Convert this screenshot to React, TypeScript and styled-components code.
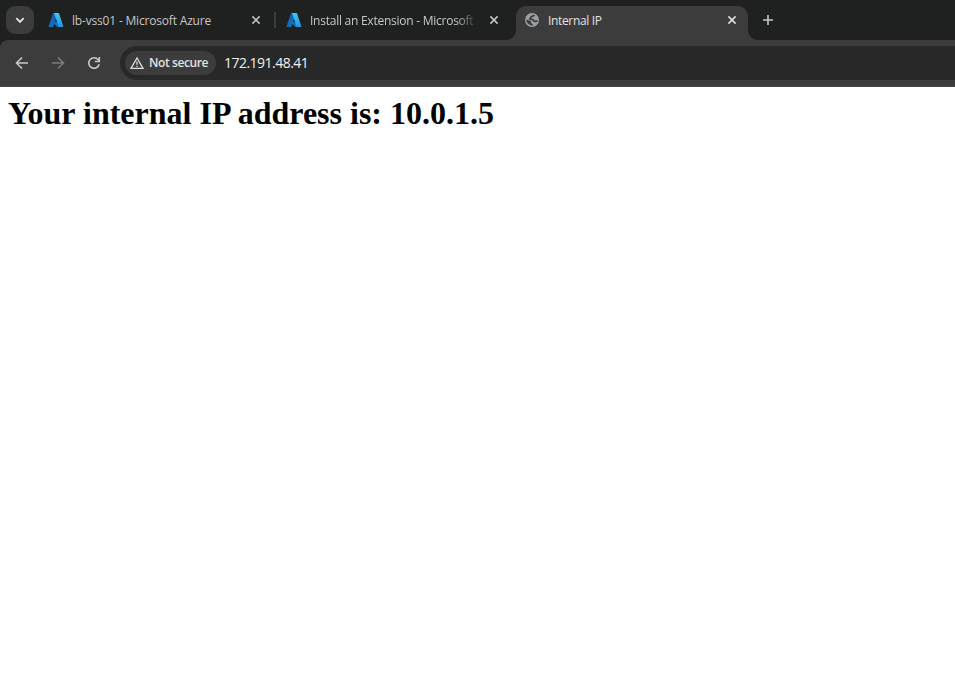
import React from "react";
import styled, { createGlobalStyle } from "styled-components";

const GlobalStyle = createGlobalStyle`
  * { box-sizing: border-box; }
  html, body { margin: 0; background: #fff; overflow: hidden; }
`;

const Browser = styled.div`
  height: 698px;
  display: flex;
  flex-direction: column;
  background: #fff;
  font-family: "Open Sans", "Noto Sans", sans-serif;
`;

const TabStrip = styled.header`
  height: 40px;
  flex: none;
  display: flex;
  align-items: flex-end;
  background: #1f2020;
  padding-left: 6px;
`;

const TabSearch = styled.button`
  width: 28px;
  height: 28px;
  margin: 0 6px 6px 0;
  padding: 0;
  border: 0;
  border-radius: 9px;
  background: #3c3c3c;
  display: grid;
  place-items: center;
`;

const Tab = styled.div<{ $active?: boolean }>`
  position: relative;
  width: 232px;
  height: 34px;
  padding: 0 8px 6px;
  display: flex;
  align-items: center;
  color: ${(p) => (p.$active ? "#e3e3e3" : "#c7c7c7")};
  background: ${(p) => (p.$active ? "#3c3c3c" : "transparent")};
  border-radius: 10px 10px 0 0;

  &::before,
  &::after {
    content: ${(p) => (p.$active ? '""' : "none")};
    position: absolute;
    bottom: 0;
    width: 10px;
    height: 10px;
  }
  &::before {
    left: -10px;
    background: radial-gradient(circle at 0 0, transparent 9.5px, #3c3c3c 10.5px);
  }
  &::after {
    right: -10px;
    background: radial-gradient(circle at 100% 0, transparent 9.5px, #3c3c3c 10.5px);
  }
`;

const Favicon = styled.span`
  width: 16px;
  height: 16px;
  flex: none;

  svg { display: block; }
`;

const TabTitle = styled.span<{ $spacing: number; $fade?: boolean }>`
  flex: 1;
  min-width: 0;
  margin-left: 8px;
  padding-top: 2px;
  overflow: hidden;
  white-space: nowrap;
  font-size: 12px;
  line-height: 18px;
  letter-spacing: ${(p) => p.$spacing}px;
  mask-image: ${(p) => (p.$fade ? "linear-gradient(to right, #000 calc(100% - 22px), transparent)" : "none")};
`;

const CloseButton = styled.button<{ $tight?: boolean }>`
  width: 16px;
  height: 16px;
  margin-left: ${(p) => (p.$tight ? 8 : 12)}px;
  padding: 0;
  border: 0;
  background: none;
  color: inherit;
  display: grid;
  place-items: center;
`;

const Divider = styled.i`
  width: 2px;
  height: 16px;
  margin: 0 2px 12px;
  background: #3c3c3c;
`;

const TabGap = styled.span`
  width: 6px;
`;

const NewTab = styled.button`
  width: 28px;
  height: 28px;
  margin: 0 0 6px 6px;
  padding: 0;
  border: 0;
  background: none;
  display: grid;
  place-items: center;
`;

const ToolbarBack = styled.div`
  flex: none;
  background: #1f2020;
`;

const Toolbar = styled.nav`
  height: 47px;
  display: flex;
  align-items: center;
  padding: 0 0 1px 4px;
  background: #3c3c3c;
  border-top-left-radius: 8px;
  border-bottom: 1px solid #454445;
`;

const NavButton = styled.button`
  width: 36px;
  height: 34px;
  padding: 0;
  border: 0;
  background: none;
  display: grid;
  place-items: center;
`;

const AddressBar = styled.div`
  flex: 1;
  height: 34px;
  margin-left: 8px;
  padding-left: 5px;
  display: flex;
  align-items: center;
  border-radius: 17px 0 0 17px;
  background: #282828;
`;

const SecurityChip = styled.div`
  width: 91px;
  height: 24px;
  padding-left: 5px;
  display: flex;
  align-items: center;
  gap: 5px;
  border-radius: 12px;
  background: #3c3c3c;
  color: #e3e3e3;
  font-size: 12px;
  font-weight: 600;
  letter-spacing: -0.4px;
  white-space: nowrap;
`;

const Url = styled.span`
  margin-left: 8px;
  color: #f0f0f0;
  font-size: 14px;
  letter-spacing: -0.52px;
`;

const Page = styled.main`
  flex: 1;
  padding: 8px;
`;

const Heading = styled.h1`
  margin: 0;
  color: #000;
  font: bold 32px/37px "Liberation Serif", "Times New Roman", serif;
`;

const AzureLogo = ({ id }: { id: string }) => (
  <svg width="16" height="16" viewBox="0 0 96 96">
    <defs>
      <linearGradient id={`${id}-l`} x1="0.6" y1="0" x2="0.2" y2="1">
        <stop stopColor="#1a5fa8" />
        <stop offset="1" stopColor="#0f70c4" />
      </linearGradient>
      <linearGradient id={`${id}-r`} x1="0.3" y1="0" x2="0.7" y2="1">
        <stop stopColor="#3ccbf4" />
        <stop offset="1" stopColor="#2892df" />
      </linearGradient>
    </defs>
    <path fill={`url(#${id}-l)`} d="M33.34 6.54h26.04l-27.03 80.1a4.15 4.15 0 0 1-3.94 2.81H8.15a4.14 4.14 0 0 1-3.93-5.47L29.4 9.38a4.15 4.15 0 0 1 3.94-2.83z" />
    <path fill="#0078d4" d="M71.17 60.26H29.88a1.91 1.91 0 0 0-1.3 3.31l26.53 24.76a4.17 4.17 0 0 0 2.85 1.13h23.38z" />
    <path fill={`url(#${id}-r)`} d="M66.6 9.36a4.14 4.14 0 0 0-3.93-2.82H33.65a4.15 4.15 0 0 1 3.93 2.82l25.18 74.62a4.15 4.15 0 0 1-3.93 5.48h29.02a4.15 4.15 0 0 0 3.93-5.48z" />
  </svg>
);

const GlobeIcon = () => (
  <svg width="16" height="16" viewBox="0 0 16 16">
    <circle cx="8" cy="8" r="7" fill="#9aa0a6" />
    <path
      fill="none"
      stroke="#3c3c3c"
      strokeWidth="1.7"
      strokeLinejoin="round"
      d="M10.500 3.200C9.800 4.600 7 3.700 6.900 5.300c0 .900-1.400.8-1.200 1.600.5.9 2.600.2 3.500.8.9.500.6 1.600 1.700 1.700l2.700-.2"
    />
    <path fill="#3c3c3c" d="M2.300 7.600l3.600 1.200c1.300.5 1.500 1.100 1.300 1.900 0 .6.400.8 1 1 .7.200.9.600.8 1.200v.5c-3.700.4-6.700-2.400-6.700-5.800z" />
  </svg>
);

const CloseIcon = () => (
  <svg width="16" height="16" viewBox="0 0 16 16" stroke="currentColor" strokeWidth="1.5">
    <path d="M4.400 4.400l7.200 7.200M11.600 4.400l-7.200 7.200" />
  </svg>
);

const ChevronIcon = () => (
  <svg width="16" height="16" viewBox="0 0 16 16" fill="none" stroke="#e3e3e3" strokeWidth="1.900">
    <path d="M4.300 6.200L8 9.900l3.700-3.700" />
  </svg>
);

const PlusIcon = () => (
  <svg width="16" height="16" viewBox="0 0 16 16" stroke="#c7c7c7" strokeWidth="1.600">
    <path d="M8 3v10M3 8h10" />
  </svg>
);

const ArrowIcon = ({ forward }: { forward?: boolean }) => (
  <svg width="16" height="16" viewBox="0 0 16 16" fill="none" stroke={forward ? "#7b7b7b" : "#c7c7c7"} strokeWidth="1.600">
    <path d={forward ? "M2 8h11M8 2.500L13.500 8 8 13.500" : "M14 8H3M8 2.500L2.500 8 8 13.500"} />
  </svg>
);

const ReloadIcon = () => (
  <svg width="16" height="16" viewBox="0 0 16 16" fill="none" stroke="#c7c7c7" strokeWidth="1.600">
    <path d="M13.200 9.200A5.300 5.300 0 1 1 12.200 4.700L13.300 6" />
    <path d="M13.300 2v4.500H8.800" />
  </svg>
);

const WarningIcon = () => (
  <svg width="14" height="14" viewBox="0 0 14 14" fill="none" stroke="#dedede" strokeWidth="1.300">
    <path d="M7 2L13 12.300H1z" />
    <path d="M7 5.500v3.300M7 9.700v1.200" />
  </svg>
);

export default function App() {
  return (
    <Browser>
      <GlobalStyle />
      <TabStrip>
        <TabSearch aria-label="Search tabs"><ChevronIcon /></TabSearch>
        <Tab>
          <Favicon><AzureLogo id="first" /></Favicon>
          <TabTitle $spacing={-0.18}>lb-vss01 - Microsoft Azure</TabTitle>
          <CloseButton aria-label="Close tab"><CloseIcon /></CloseButton>
        </Tab>
        <Divider />
        <Tab>
          <Favicon><AzureLogo id="second" /></Favicon>
          <TabTitle $spacing={-0.25} $fade>Install an Extension - Microsoft Azure</TabTitle>
          <CloseButton $tight aria-label="Close tab"><CloseIcon /></CloseButton>
        </Tab>
        <TabGap />
        <Tab $active>
          <Favicon><GlobeIcon /></Favicon>
          <TabTitle $spacing={-0.35}>Internal IP</TabTitle>
          <CloseButton aria-label="Close tab"><CloseIcon /></CloseButton>
        </Tab>
        <NewTab aria-label="New tab"><PlusIcon /></NewTab>
      </TabStrip>
      <ToolbarBack>
        <Toolbar>
          <NavButton aria-label="Back"><ArrowIcon /></NavButton>
          <NavButton aria-label="Forward"><ArrowIcon forward /></NavButton>
          <NavButton aria-label="Reload"><ReloadIcon /></NavButton>
          <AddressBar>
            <SecurityChip><WarningIcon />Not secure</SecurityChip>
            <Url>172.191.48.41</Url>
          </AddressBar>
        </Toolbar>
      </ToolbarBack>
      <Page>
        <Heading>Your internal IP address is: 10.0.1.5</Heading>
      </Page>
    </Browser>
  );
}
